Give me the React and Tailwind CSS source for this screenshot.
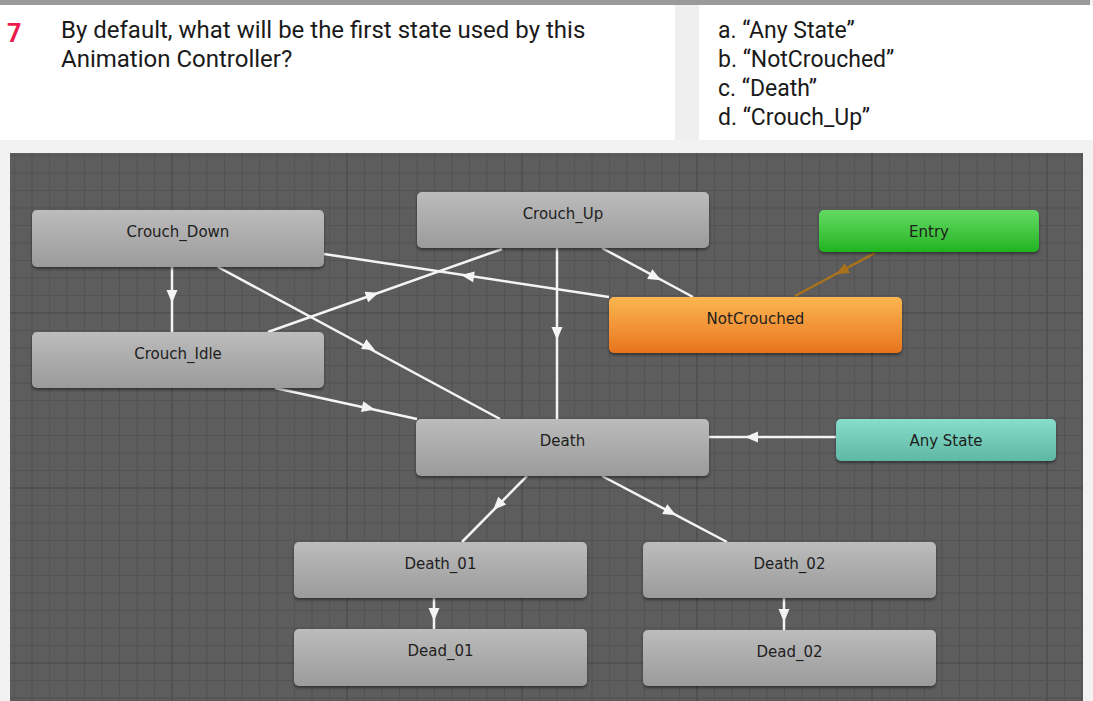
import React from "react";

const nodes = [
  { label: "Crouch_Down", x: 32, y: 210, w: 292, h: 57, kind: "gray" },
  { label: "Crouch_Idle", x: 32, y: 332, w: 292, h: 56, kind: "gray" },
  { label: "Crouch_Up", x: 417, y: 192, w: 292, h: 56, kind: "gray" },
  { label: "NotCrouched", x: 609, y: 297, w: 293, h: 56, kind: "orange" },
  { label: "Entry", x: 819, y: 210, w: 220, h: 42, kind: "green" },
  { label: "Any State", x: 836, y: 419, w: 220, h: 42, kind: "teal" },
  { label: "Death", x: 416, y: 419, w: 293, h: 57, kind: "gray" },
  { label: "Death_01", x: 294, y: 542, w: 293, h: 56, kind: "gray" },
  { label: "Dead_01", x: 294, y: 629, w: 293, h: 57, kind: "gray" },
  { label: "Death_02", x: 643, y: 542, w: 293, h: 56, kind: "gray" },
  { label: "Dead_02", x: 643, y: 630, w: 293, h: 56, kind: "gray" },
];

// [x1, y1, x2, y2, arrowX, arrowY]
const edges = [
  [172, 267, 172, 332, 172, 296],
  [218, 267, 500, 419, 369, 347],
  [609, 297, 324, 254, 468, 276],
  [268, 332, 502, 249, 372, 295],
  [275, 388, 417, 419, 368, 408],
  [557, 248, 557, 419, 557, 333],
  [602, 248, 693, 297, 655, 277],
  [836, 437, 709, 437, 752, 437],
  [527, 476, 462, 542, 498, 505],
  [602, 476, 727, 542, 670, 512],
  [434, 598, 434, 629, 434, 614],
  [784, 598, 784, 630, 784, 615],
];

const kinds = {
  gray: "bg-gradient-to-b from-[#bcbcbc] to-[#9b9b9b]",
  orange: "bg-gradient-to-b from-[#fbb650] to-[#e7741c]",
  green: "bg-gradient-to-b from-[#62da62] to-[#1db41d]",
  teal: "bg-gradient-to-b from-[#88ddcb] to-[#5db8a4]",
};

const GX = 10;
const GY = 153;

function Arrow({ x1, y1, x2, y2, ax, ay, color }) {
  const ang = (Math.atan2(y2 - y1, x2 - x1) * 180) / Math.PI;
  return (
    <g>
      <line x1={x1} y1={y1} x2={x2} y2={y2} stroke={color} strokeWidth="2.5" />
      <polygon
        points="7,0 -6,-5.5 -6,5.5"
        fill={color}
        transform={`translate(${ax} ${ay}) rotate(${ang})`}
      />
    </g>
  );
}

function Graph() {
  const W = 1073;
  const H = 548;
  const vlines = [];
  for (let i = 0; i * 17.5 + 4.5 < W; i++) {
    const x = 4.5 + i * 17.5;
    vlines.push(
      <line key={"v" + i} x1={x} y1={0} x2={x} y2={H} stroke={i % 10 === 9 ? "#464646" : "#535353"} strokeWidth="1" />
    );
  }
  const hlines = [];
  for (let j = 0; j * 17.5 + 2.5 < H; j++) {
    const y = 2.5 + j * 17.5;
    hlines.push(
      <line key={"h" + j} x1={0} y1={y} x2={W} y2={y} stroke={j % 10 === 9 ? "#464646" : "#535353"} strokeWidth="1" />
    );
  }

  return (
    <div className="relative ml-[10px] w-[1073px] h-[548px] bg-[#5d5d5d] overflow-hidden">
      <svg className="absolute inset-0" width={W} height={H}>
        {vlines}
        {hlines}
        <g transform={`translate(${-GX} ${-GY})`}>
          {edges.map((e, i) => (
            <Arrow key={i} x1={e[0]} y1={e[1]} x2={e[2]} y2={e[3]} ax={e[4]} ay={e[5]} color="#f4f4f4" />
          ))}
          <Arrow x1={875} y1={253} x2={795} y2={296} ax={842} ay={271} color="#a8731c" />
        </g>
      </svg>
      {nodes.map((n) => (
        <div
          key={n.label}
          className={`absolute rounded-[5px] shadow-[0_2px_3px_rgba(0,0,0,0.45)] text-center pt-[12px] text-[15px] leading-[20px] text-[#1e1e1e] font-['DejaVu_Sans',sans-serif] ${kinds[n.kind]}`}
          style={{ left: n.x - GX, top: n.y - GY, width: n.w, height: n.h }}
        >
          {n.label}
        </div>
      ))}
    </div>
  );
}

export default function App() {
  return (
    <div className="w-[1093px] h-[701px] overflow-hidden bg-[#f2f2f2] font-['Roboto',sans-serif]">
      <div className="h-[5px] w-[1090px] bg-[#9a9a9a]" />
      <div className="flex h-[135px]">
        <div className="w-[675px] bg-white flex pt-[11px]">
          <div className="w-[61px] pl-[7px] mt-[3px] text-[25px] leading-[29px] font-bold text-[#ec1c4f]">7</div>
          <div className="text-[24px] leading-[29px] text-[#1a1a1a]">
            By default, what will be the first state used by this
            <br />
            Animation Controller?
          </div>
        </div>
        <div className="w-[24px] bg-[#efefef]" />
        <div className="flex-1 bg-white pl-[19px] pt-[11px] text-[23px] leading-[29px] text-[#1a1a1a]">
          <div>a. “Any State”</div>
          <div>b. “NotCrouched”</div>
          <div>c. “Death”</div>
          <div>d. “Crouch_Up”</div>
        </div>
      </div>
      <div className="h-[13px]" />
      <Graph />
    </div>
  );
}
